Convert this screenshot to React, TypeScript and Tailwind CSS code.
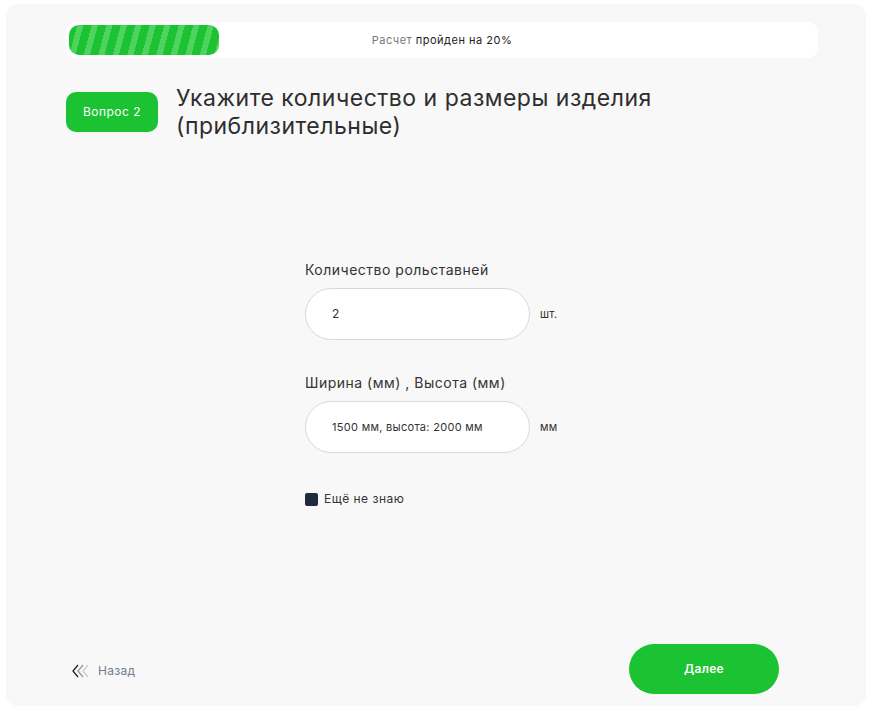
import React from "react";

export default function App() {
  return (
    <div className="min-h-screen bg-white pt-[4px] pl-[6px] tracking-[0.3px]" style={{ fontFamily: "Inter, 'Noto Sans', sans-serif" }}>
      <div className="w-[860px] h-[702px] bg-[#f8f8f8] rounded-[12px] flex flex-col pl-[60px] pr-[48px] pt-[18px] pb-[12px]">
        {/* progress */}
        <div className="h-[36px] w-[752px] bg-white rounded-[10px] p-[3px] relative flex items-center">
          <div className="h-[30px] w-[150px] rounded-[10px] bg-[repeating-linear-gradient(105deg,#1bc232_0px,#1bc232_8px,#4fd35f_8px,#4fd35f_14px)]" />
          <div className="absolute inset-0 flex items-center justify-center text-[11px] tracking-[0.5px] text-[#222]">
            <span className="text-[#777]">Расчет&nbsp;</span>
            <span>пройден на 20%</span>
          </div>
        </div>

        {/* header */}
        <div className="flex items-start mt-[34px]">
          <div className="w-[92px] h-[40px] bg-[#1bc232] rounded-[10px] flex items-center justify-center text-white text-[12px] tracking-[0.5px]">
            Вопрос 2
          </div>
          <h1 className="ml-[18px] -mt-[8px] text-[23px] leading-[28px] tracking-[0.5px] text-[#2e2e2e] font-normal w-[560px]">
            Укажите количество и размеры изделия<br />(приблизительные)
          </h1>
        </div>

        {/* form */}
        <div className="ml-[239px] mt-[120px] flex flex-col">
          <label className="text-[14px] text-[#333] leading-[20px] tracking-[0.5px]">Количество рольставней</label>
          <div className="flex items-center mt-[8px]">
            <div className="w-[225px] h-[52px] bg-white rounded-full border border-[#d9d9d9] flex items-center pl-[26px] text-[12px] text-[#333]">
              2
            </div>
            <span className="ml-[10px] text-[11px] text-[#333]">шт.</span>
          </div>

          <label className="text-[14px] text-[#333] leading-[20px] tracking-[0.5px] mt-[33px]">Ширина (мм) , Высота (мм)</label>
          <div className="flex items-center mt-[8px]">
            <div className="w-[225px] h-[52px] bg-white rounded-full border border-[#d9d9d9] flex items-center pl-[26px] text-[11px] text-[#333]">
              1500 мм, высота: 2000 мм
            </div>
            <span className="ml-[10px] text-[11px] text-[#333]">мм</span>
          </div>

          <div className="flex items-center mt-[37px]">
            <div className="w-[13px] h-[13px] bg-[#1e2a3d] rounded-[2px]" />
            <span className="ml-[6px] text-[12px] text-[#333] tracking-[0.5px]">Ещё не знаю</span>
          </div>
        </div>

        {/* footer */}
        <div className="mt-auto flex items-center justify-between pr-[39px] pl-[6px]">
          <div className="flex items-center gap-[6px] pt-[3px]">
            <svg width="20" height="14" viewBox="0 0 20 14" fill="none">
              <path d="M6 1L1 7L6 13" stroke="#222" strokeWidth="1.3" />
              <path d="M11 1L6 7L11 13" stroke="#999" strokeWidth="1.3" />
              <path d="M16 1L11 7L16 13" stroke="#ccc" strokeWidth="1.3" />
            </svg>
            <span className="text-[12px] text-[#6f7f90]">Назад</span>
          </div>
          <div className="w-[150px] h-[50px] rounded-full bg-[#1bc232] flex items-center justify-center text-white text-[12px] font-semibold">
            Далее
          </div>
        </div>
      </div>
    </div>
  );
}
